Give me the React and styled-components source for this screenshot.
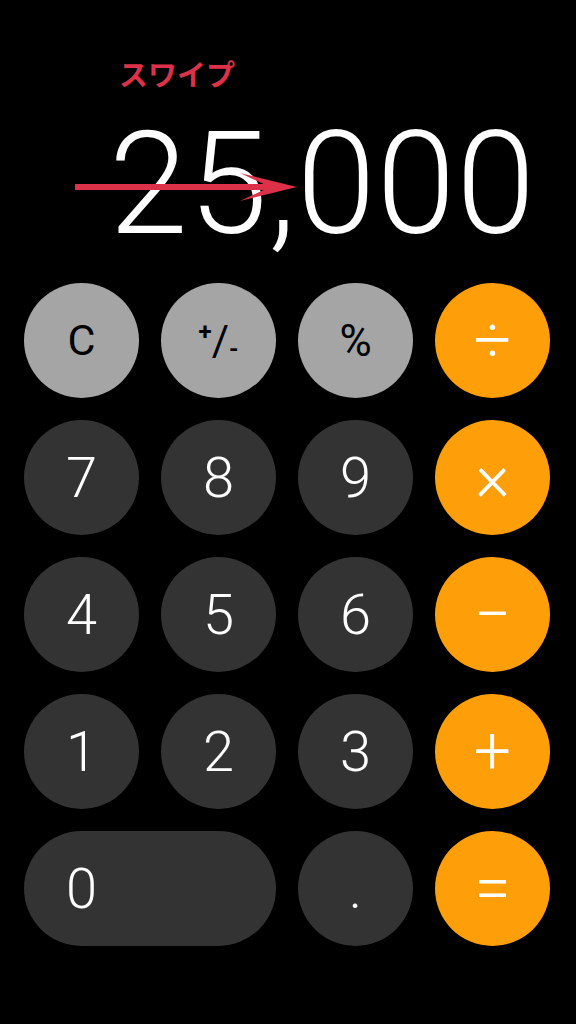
import React from "react";
import styled, { createGlobalStyle } from "styled-components";

// iOS風の電卓画面

const GlobalStyle = createGlobalStyle`
    html, body {
        margin: 0;
        padding: 0;
        background: #000;
    }
    body {
        font-family: Roboto, "Liberation Sans", "Noto Sans CJK JP", sans-serif;
    }
`;

const Screen = styled.div`
    width: 576px;
    height: 1024px;
    background: #000;
    padding-top: 59px;
    box-sizing: border-box;
    display: flex;
    flex-direction: column;
`;

const SwipeLabel = styled.div`
    margin-left: 119px;
    height: 28px;
    font-family: "Noto Sans CJK JP", sans-serif;
    font-size: 29px;
    line-height: 28px;
    font-weight: 700;
    color: #dc3148;
`;

// 表示部分
const Display = styled.div`
    position: relative;
    margin-top: 26px;
    height: 143px;
    padding-right: 40px;
    text-align: right;
    font-family: Roboto, sans-serif;
    font-weight: 300;
    font-size: 142px;
    line-height: 143px;
    color: #fff;
    letter-spacing: 1px;
`;

const Arrow = styled.svg`
    position: absolute;
    left: 70px;
    top: 57px;
`;

// キーパッド
const Keypad = styled.div`
    margin-top: 27px;
    padding-left: 24px;
    display: grid;
    grid-template-columns: repeat(4, 115px);
    grid-auto-rows: 115px;
    gap: 22px;
`;

const colors = {
    func: { bg: "#a5a5a5", fg: "#000", weight: 400 },
    num: { bg: "#333333", fg: "#fff", weight: 300 },
    op: { bg: "#fe9f0a", fg: "#fff", weight: 300 },
};

const Key = styled.div`
    border-radius: 58px;
    background: ${({ $kind }) => colors[$kind].bg};
    color: ${({ $kind }) => colors[$kind].fg};
    font-weight: ${({ $kind }) => colors[$kind].weight};
    grid-column: span ${({ $wide }) => ($wide ? 2 : 1)};
    display: flex;
    align-items: center;
    justify-content: ${({ $wide }) => ($wide ? "flex-start" : "center")};
    font-family: Roboto, "Liberation Sans", sans-serif;
    font-size: ${({ $size }) => $size || 56}px;
    line-height: 1;
    user-select: none;
`;

const KeyLabel = styled.span`
    width: 115px;
    text-align: center;
`;

const PlusMinus = styled.span`
    display: inline-flex;
    align-items: center;
    font-size: 42px;
    sup, sub {
        font-size: 24px;
        line-height: 1;
        font-weight: 700;
    }
    sup {
        margin-top: -18px;
    }
    sub {
        margin-top: 16px;
    }
`;

const keys = [
    { label: "C", kind: "func", size: 43 },
    { label: "+/-", kind: "func" },
    { label: "%", kind: "func", size: 44 },
    { label: "÷", kind: "op", size: 66 },
    { label: "7", kind: "num" },
    { label: "8", kind: "num" },
    { label: "9", kind: "num" },
    { label: "×", kind: "op", size: 66 },
    { label: "4", kind: "num" },
    { label: "5", kind: "num" },
    { label: "6", kind: "num" },
    { label: "−", kind: "op", size: 66 },
    { label: "1", kind: "num" },
    { label: "2", kind: "num" },
    { label: "3", kind: "num" },
    { label: "+", kind: "op", size: 66 },
    { label: "0", kind: "num", wide: true },
    { label: ".", kind: "num" },
    { label: "=", kind: "op", size: 66 },
];

const App = () => {
    return (
        <>
            <GlobalStyle />
            <Screen>
                <SwipeLabel>スワイプ</SwipeLabel>
                <Display>
                    25,000
                    <Arrow width="232" height="34" viewBox="0 0 232 34">
                        <rect x="5" y="14" width="200" height="6" fill="#dc3148" />
                        <polygon points="170,3 227,17 170,31 200,17" fill="#dc3148" />
                    </Arrow>
                </Display>
                <Keypad>
                    {keys.map((k) => (
                        <Key key={k.label} $kind={k.kind} $size={k.size} $wide={k.wide}>
                            {k.label === "+/-" ? (
                                <PlusMinus>
                                    <sup>+</sup>/<sub>-</sub>
                                </PlusMinus>
                            ) : k.wide ? (
                                <KeyLabel>{k.label}</KeyLabel>
                            ) : (
                                k.label
                            )}
                        </Key>
                    ))}
                </Keypad>
            </Screen>
        </>
    );
};

export default App;
